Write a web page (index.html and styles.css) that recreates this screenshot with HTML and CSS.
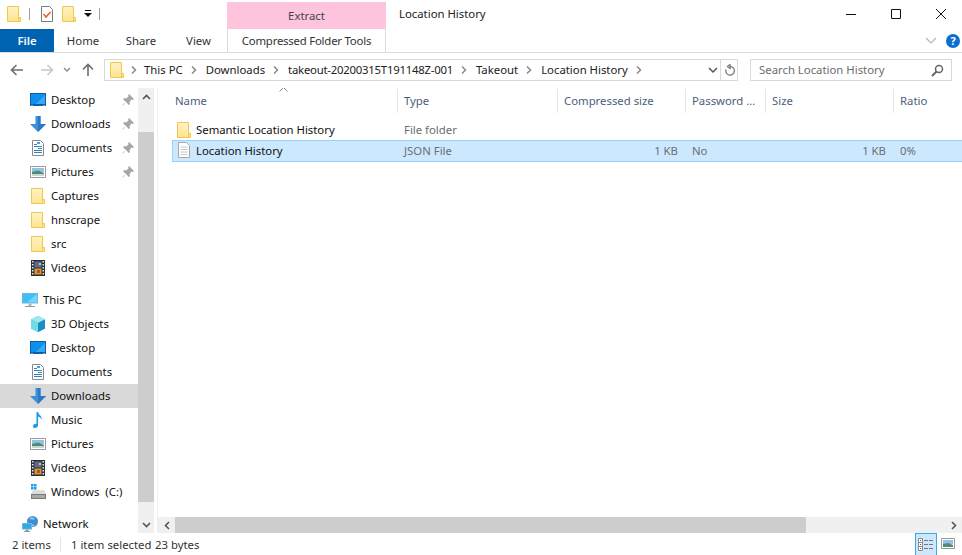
FILE: index.html
```html
<!DOCTYPE html>
<html lang="en">
<head>
  <meta charset="UTF-8" />
  <title>Location History</title>
  <link rel="stylesheet" href="styles.css">
</head>
<body>
  <svg class="defs" width="0" height="0">
    <defs>
      <linearGradient id="folderFill" x1="0" y1="0" x2="0" y2="1">
        <stop offset="0" stop-color="#fff3c4"/>
        <stop offset="1" stop-color="#ffe38f"/>
      </linearGradient>
      <symbol id="i-folder" viewBox="0 0 16 16">
        <path d="M1.500.5h11v15h-11z" fill="url(#folderFill)" stroke="#f0c850"/>
        <path d="M12.500 11.500h2v4h-2z" fill="#ffe79a" stroke="#f0c850"/>
      </symbol>
      <symbol id="i-desktop" viewBox="0 0 16 16">
        <path d="M0 1h16v13H0z" fill="#0c5fa8"/>
        <path d="M1 2h14v10H1z" fill="#0f8fec"/>
        <path d="M6 12l9-9v9z" fill="#39a7f3"/>
        <path d="M1 13h2v.6H1zM13 13h2v.6h-2z" fill="#fff"/>
      </symbol>
      <symbol id="i-down" viewBox="0 0 16 16">
        <path d="M5.500 0h5v8H16l-8 8-8-8h5.500z" fill="#3b8fdc"/>
        <path d="M8 0h2.500v8H16l-8 8z" fill="#2a78c6"/>
      </symbol>
      <symbol id="i-docs" viewBox="0 0 16 16">
        <path d="M2.500.5h8l3 3v12h-11z" fill="#fff" stroke="#8a8a8a"/>
        <path d="M4 4h3v1H4zM4 6h8v1H4zM4 10h8v1H4zM4 12h8v1H4z" fill="#2f80c4"/>
        <path d="M8 8h4v1H8z" fill="#5a8a6a"/>
        <path d="M7 2h3v2H7z" fill="#4aa0e0"/>
      </symbol>
      <symbol id="i-pics" viewBox="0 0 16 16">
        <path d="M.5 2.500h15v11H.5z" fill="#fff" stroke="#9a9a9a"/>
        <path d="M2 4h12v4H2z" fill="#8fc3e8"/>
        <path d="M2 8l6-1.500L14 9v3H2z" fill="#4f8a7a"/>
        <path d="M2 10h12v2H2z" fill="#c9d7c7"/>
      </symbol>
      <symbol id="i-video" viewBox="0 0 16 16">
        <path d="M1 0h14v16H1z" fill="#303030"/>
        <path d="M2 1h1.500v1.500H2zM2 4h1.500v1.500H2zM2 7h1.500v1.500H2zM2 10h1.500v1.500H2zM2 13h1.500v1.500H2zM12.500 1H14v1.500h-1.500zM12.500 4H14v1.500h-1.500zM12.500 7H14v1.500h-1.500zM12.500 10H14v1.500h-1.500zM12.500 13H14v1.500h-1.500z" fill="#e8e8e8"/>
        <path d="M4.500 1.500h7v6h-7z" fill="#3d78b8"/>
        <path d="M4.500 8.500h7v6h-7z" fill="#d89a30"/>
        <path d="M6 3h2v3H6zM7 10h3v3H7z" fill="#c04a30"/>
        <path d="M9 3h2v2H9z" fill="#e6c640"/>
      </symbol>
      <symbol id="i-pc" viewBox="0 0 16 16">
        <path d="M0 1h16v10.500H0z" fill="#6fb4dc"/>
        <path d="M1 2h14v8.500H1z" fill="#3fc0f5"/>
        <path d="M5 10.500L15 2v8.500z" fill="#74d4fa"/>
        <path d="M6.500 11.500h3V14h-3z" fill="#a8b8c4"/>
        <path d="M3 14h10v1H3z" fill="#8a9aa6"/>
      </symbol>
      <symbol id="i-cube" viewBox="0 0 16 16">
        <path d="M8 0l7 3.500v9L8 16l-7-3.500v-9z" fill="#2fa8c8"/>
        <path d="M8 0l7 3.500L8 7 1 3.500z" fill="#9ceaf0"/>
        <path d="M1 3.500L8 7v9l-7-3.500z" fill="#6fdde6"/>
        <path d="M8 7l7-3.500v9L8 16z" fill="#1a8fc0"/>
      </symbol>
      <symbol id="i-music" viewBox="0 0 16 16">
        <path d="M6.500 0h1.600c.3 3 4.400 3.600 3.400 8-.5-2-2-3-3.400-3.400V13c0 1.800-1.500 3-3.200 3C3.700 16 3 15.200 3 14.200c0-1.600 1.800-2.800 3.500-2.300z" fill="#1e9be8"/>
      </symbol>
      <symbol id="i-drive" viewBox="0 0 16 16">
        <path d="M1 0h2.500v2.500H1zM4 0h2.500v2.500H4zM1 3h2.500v2.500H1zM4 3h2.500v2.500H4z" fill="#19a0e8"/>
        <path d="M3 6h11l2 4H1z" fill="#dcdcdc"/>
        <path d="M1 10h15v5H1z" fill="#7a7a7a"/>
        <path d="M2 11h13v3H2z" fill="#a8a8a8"/>
        <path d="M11 12h3v1h-3z" fill="#6fe04a"/>
      </symbol>
      <symbol id="i-net" viewBox="0 0 16 16">
        <circle cx="10.500" cy="5.500" r="5.500" fill="#3f8fd0"/>
        <path d="M7 2c2-1.500 5-1 6 1-2 1-4 1-6-1zM8 8c2 0 4 .5 5 1.500-1.500 1.500-4 1.500-5-1.500z" fill="#8cc4ea"/>
        <path d="M0 7h10v6.500H0z" fill="#6fb4dc"/>
        <path d="M1 8h8v4.500H1z" fill="#2fa8e8"/>
        <path d="M3.500 13.500h3V15h-3zM2 15h6v1H2z" fill="#8a9aa6"/>
      </symbol>
      <symbol id="i-pin" viewBox="0 0 12 12">
        <path d="M7 0l5 5-1.500 1L9.500 5.500 7.500 8l.5 2L6.800 11 4 8 1 11.500 .5 11 4 8 1 5.200 2 4l2 .5 2.500-2L6 1.500z" fill="#a3a7ad"/>
      </symbol>
      <symbol id="i-crumb" viewBox="0 0 6 8">
        <path d="M1 .5L4.500 4 1 7.500" fill="none" stroke="#8a8a8a" stroke-width="1.500"/>
      </symbol>
    </defs>
  </svg>

  <div class="titlebar">
    <div class="quick">
      <svg class="ic qa-first"><use href="#i-folder"/></svg>
      <span class="qa-sep"></span>
      <svg class="ic" viewBox="0 0 16 16">
        <path d="M2.500.5h8l3 3v12h-11z" fill="#fff" stroke="#7a7a7a"/>
        <path d="M4.500 8l2.500 3 4.500-5" fill="none" stroke="#e8602c" stroke-width="1.500"/>
      </svg>
      <svg class="ic"><use href="#i-folder"/></svg>
      <svg class="qa-drop" viewBox="0 0 8 7" width="8" height="7">
        <path d="M1 0h6v1H1zM0 3h8L4 7z" fill="#111"/>
      </svg>
      <span class="qa-sep"></span>
    </div>
    <div class="extract">Extract</div>
    <div class="win-title">Location History</div>
    <div class="win-btns">
      <svg width="12" height="12" viewBox="0 0 12 12"><path d="M1 6.500h10" stroke="#111"/></svg>
      <svg width="12" height="12" viewBox="0 0 12 12"><path d="M1.500 1.500h9v9h-9z" fill="none" stroke="#111"/></svg>
      <svg width="12" height="12" viewBox="0 0 12 12"><path d="M1 1l10 10M11 1L1 11" stroke="#111" fill="none"/></svg>
    </div>
  </div>

  <div class="tabs">
    <div class="tab file">File</div>
    <div class="tab home">Home</div>
    <div class="tab share">Share</div>
    <div class="tab view">View</div>
    <div class="tab context">Compressed Folder Tools</div>
    <div class="tabs-right">
      <svg width="12" height="8" viewBox="0 0 12 8"><path d="M1 1l5 5 5-5" fill="none" stroke="#b4b4b4" stroke-width="1.200"/></svg>
      <span class="help">?</span>
    </div>
  </div>

  <div class="addressbar">
    <div class="nav-btns">
      <svg width="14" height="12" viewBox="0 0 14 12"><path d="M13 6H2M6.500 1L1.500 6l5 5" fill="none" stroke="#6d6d6d" stroke-width="1.600"/></svg>
      <svg class="fwd" width="14" height="12" viewBox="0 0 14 12"><path d="M1 6h11M7.500 1l5 5-5 5" fill="none" stroke="#c8c8c8" stroke-width="1.600"/></svg>
      <svg class="recent" width="8" height="6" viewBox="0 0 8 6"><path d="M1 1l3 3 3-3" fill="none" stroke="#8a8a8a" stroke-width="1.300"/></svg>
      <svg class="up" width="12" height="14" viewBox="0 0 12 14"><path d="M6 13V2M1 6.500l5-5 5 5" fill="none" stroke="#6d6d6d" stroke-width="1.600"/></svg>
    </div>
    <div class="path">
      <svg class="ic path-folder"><use href="#i-folder"/></svg>
      <svg class="crumb"><use href="#i-crumb"/></svg><span>This PC</span>
      <svg class="crumb"><use href="#i-crumb"/></svg><span>Downloads</span>
      <svg class="crumb"><use href="#i-crumb"/></svg><span class="long">takeout-20200315T191148Z-001</span>
      <svg class="crumb"><use href="#i-crumb"/></svg><span>Takeout</span>
      <svg class="crumb"><use href="#i-crumb"/></svg><span>Location History</span>
      <svg class="crumb"><use href="#i-crumb"/></svg>
      <div class="path-end">
        <svg class="path-drop" width="10" height="7" viewBox="0 0 10 7"><path d="M1 1l4 4 4-4" fill="none" stroke="#555" stroke-width="1.500"/></svg>
        <span class="path-sep"></span>
        <svg width="12" height="13" viewBox="0 0 12 13"><path d="M6 2.500a4.300 4.300 0 1 1-4 3M6 .5v4L3.500 2.500z" fill="none" stroke="#7a7a7a" stroke-width="1.300"/></svg>
      </div>
    </div>
    <div class="search">
      <span>Search Location History</span>
      <svg width="13" height="13" viewBox="0 0 13 13"><circle cx="8" cy="5" r="3.500" fill="none" stroke="#666" stroke-width="1.500"/><path d="M5.500 7.500L1 12" stroke="#666" stroke-width="2"/></svg>
    </div>
  </div>

  <div class="main">
    <div class="sidebar">
      <ul class="tree">
        <li><svg class="ic"><use href="#i-desktop"/></svg>Desktop<svg class="pin"><use href="#i-pin"/></svg></li>
        <li><svg class="ic"><use href="#i-down"/></svg>Downloads<svg class="pin"><use href="#i-pin"/></svg></li>
        <li><svg class="ic"><use href="#i-docs"/></svg>Documents<svg class="pin"><use href="#i-pin"/></svg></li>
        <li><svg class="ic"><use href="#i-pics"/></svg>Pictures<svg class="pin"><use href="#i-pin"/></svg></li>
        <li><svg class="ic"><use href="#i-folder"/></svg>Captures</li>
        <li><svg class="ic"><use href="#i-folder"/></svg>hnscrape</li>
        <li><svg class="ic"><use href="#i-folder"/></svg>src</li>
        <li><svg class="ic"><use href="#i-video"/></svg>Videos</li>
      </ul>
      <ul class="tree">
        <li class="root"><svg class="ic"><use href="#i-pc"/></svg>This PC</li>
        <li><svg class="ic"><use href="#i-cube"/></svg>3D Objects</li>
        <li><svg class="ic"><use href="#i-desktop"/></svg>Desktop</li>
        <li><svg class="ic"><use href="#i-docs"/></svg>Documents</li>
        <li class="current"><svg class="ic"><use href="#i-down"/></svg>Downloads</li>
        <li><svg class="ic"><use href="#i-music"/></svg>Music</li>
        <li><svg class="ic"><use href="#i-pics"/></svg>Pictures</li>
        <li><svg class="ic"><use href="#i-video"/></svg>Videos</li>
        <li><svg class="ic"><use href="#i-drive"/></svg>Windows&nbsp;&nbsp;(C:)</li>
      </ul>
      <ul class="tree">
        <li class="root"><svg class="ic"><use href="#i-net"/></svg>Network</li>
      </ul>
    </div>

    <div class="vscroll">
      <div class="vs-end">
        <svg width="9" height="6" viewBox="0 0 9 6"><path d="M1 5l3.500-3.500L8 5" fill="none" stroke="#555" stroke-width="1.600"/></svg>
      </div>
      <div class="vs-thumb"></div>
      <div class="vs-end low">
        <svg width="9" height="6" viewBox="0 0 9 6"><path d="M1 1l3.500 3.500L8 1" fill="none" stroke="#555" stroke-width="1.600"/></svg>
      </div>
    </div>

    <div class="content">
      <div class="files">
        <div class="cols head">
          <div class="name-head">Name<svg class="sort" width="9" height="5" viewBox="0 0 9 5"><path d="M.5 4.500l4-4 4 4" fill="none" stroke="#8a8a8a"/></svg></div>
          <div>Type</div>
          <div>Compressed size</div>
          <div>Password ...</div>
          <div>Size</div>
          <div class="last">Ratio</div>
        </div>
        <div class="cols row first">
          <div class="name"><svg class="ic"><use href="#i-folder"/></svg>Semantic Location History</div>
          <div>File folder</div>
          <div></div>
          <div></div>
          <div></div>
          <div></div>
        </div>
        <div class="cols row selected">
          <div class="name">
            <svg class="ic" viewBox="0 0 16 16">
              <path d="M2.500.5h8l3 3v12h-11z" fill="#fff" stroke="#a8a8a8"/>
              <path d="M4.500 5h7M4.500 7.500h7M4.500 10h7M4.500 12.500h7" stroke="#c8c8c8"/>
            </svg>Location History
          </div>
          <div>JSON File</div>
          <div class="num">1 KB</div>
          <div>No</div>
          <div class="num">1 KB</div>
          <div>0%</div>
        </div>
      </div>
      <div class="hscroll">
        <div class="hs-end">
          <svg width="6" height="9" viewBox="0 0 6 9"><path d="M5 1L1.500 4.500 5 8" fill="none" stroke="#555" stroke-width="1.600"/></svg>
        </div>
        <div class="hs-thumb"></div>
        <div class="hs-end right">
          <svg width="6" height="9" viewBox="0 0 6 9"><path d="M1 1l3.500 3.500L1 8" fill="none" stroke="#555" stroke-width="1.600"/></svg>
        </div>
      </div>
    </div>
  </div>

  <div class="status">
    <span class="st-items">2 items</span>
    <span class="st-sel">1 item selected</span>
    <span class="st-bytes">23 bytes</span>
    <div class="st-views">
      <div class="view-btn active">
        <svg width="16" height="14" viewBox="0 0 16 14">
          <path d="M.5.500h4v4h-4zM.5 4.500h4v4h-4zM.5 8.500h4v4h-4z" fill="#fff" stroke="#8a8a8a"/>
          <path d="M2 2h1v1H2zM2 6h1v1H2z" fill="#555"/>
          <path d="M2 10h1v1H2z" fill="#c03030"/>
          <path d="M6 2.500h4M11 2.500h4M6 6.500h4M11 6.500h4M6 10.500h4M11 10.500h4" stroke="#777"/>
        </svg>
      </div>
      <div class="view-btn">
        <svg width="14" height="12" viewBox="0 0 14 12">
          <path d="M.5.500h13v10H.5z" fill="#fff" stroke="#999"/>
          <path d="M2 2h10v4H2z" fill="#8fc3e8"/>
          <path d="M2 6l5-1 5 2v2H2z" fill="#4f8a7a"/>
        </svg>
      </div>
    </div>
  </div>
</body>
</html>
```

FILE: styles.css
```css
* {
  box-sizing: border-box;
}

html,
body {
  margin: 0;
  height: 100%;
}

body {
  width: 962px;
  height: 555px;
  overflow: hidden;
  display: flex;
  flex-direction: column;
  background-color: #fff;
  color: #111;
  font-family: "Noto Sans", sans-serif;
  font-size: 11.35px;
}

.defs {
  position: absolute;
}

.ic {
  width: 16px;
  height: 16px;
  flex: none;
}

/* title bar */
.titlebar {
  height: 29px;
  display: flex;
  flex: none;
}

.quick {
  width: 227px;
  display: flex;
  align-items: center;
  padding: 0 0 2px 6px;
}

.quick .ic + .ic {
  margin-left: 6px;
}

.qa-sep {
  width: 1px;
  height: 12px;
  margin: 0 9px 0 7px;
  background-color: #a0a0a0;
}

.qa-drop {
  margin-left: 7px;
}

.extract {
  width: 159px;
  margin-top: 2px;
  padding-top: 6px;
  text-align: center;
  background-color: #ffc4dd;
  color: #444;
}

.win-title {
  margin-left: 13px;
  padding-top: 6px;
  color: #222;
}

.win-btns {
  margin-left: auto;
  display: flex;
  align-items: center;
  gap: 33px;
  padding: 0 15px 2px 0;
}

/* ribbon tabs */
.tabs {
  height: 24px;
  flex: none;
  display: flex;
  align-items: stretch;
  border-bottom: 1px solid #dadbdc;
}

.tab {
  text-align: center;
  padding-top: 4px;
  color: #333;
}

.file {
  width: 54px;
  background-color: #0063b1;
  color: #fff;
  font-weight: 600;
}

.home,
.share {
  width: 58px;
}

.view {
  width: 57px;
}

.context {
  width: 159px;
  border-left: 1px solid #dadbdc;
  border-right: 1px solid #dadbdc;
  letter-spacing: -0.2px;
}

.tabs-right {
  margin-left: auto;
  display: flex;
  align-items: center;
  gap: 9px;
  padding-right: 2px;
}

.help {
  width: 14px;
  height: 14px;
  border-radius: 50%;
  background-color: #0a6fd0;
  color: #fff;
  font-size: 11px;
  font-weight: 700;
  line-height: 14px;
  text-align: center;
}

/* address row */
.addressbar {
  height: 35px;
  flex: none;
  display: flex;
  align-items: center;
  padding-bottom: 1px;
}

.nav-btns {
  width: 104px;
  display: flex;
  align-items: center;
  padding-left: 10px;
}

.fwd {
  margin-left: 16px;
}

.recent {
  margin-left: 9px;
}

.up {
  margin-left: 11px;
}

.path {
  width: 634px;
  height: 22px;
  display: flex;
  align-items: center;
  border: 1px solid #d9d9d9;
  padding-left: 4px;
  color: #222;
}

.path > span,
.search > span {
  padding-bottom: 2px;
}

.path > .long {
  letter-spacing: -0.23px;
}

.path-folder {
  margin-right: 1px;
}

.crumb {
  width: 6px;
  height: 8px;
  margin: 0 9px 0 8px;
  flex: none;
}

.path-folder + .crumb {
  margin: 0 7px 0 5px;
}

.path-end {
  margin-left: auto;
  display: flex;
  align-items: center;
  padding-right: 1px;
}

.path-drop {
  margin-right: 2px;
}

.path-sep {
  width: 1px;
  height: 20px;
  margin-right: 3px;
  background-color: #d9d9d9;
}

.search {
  width: 202px;
  height: 22px;
  margin-left: 12px;
  display: flex;
  align-items: center;
  justify-content: space-between;
  border: 1px solid #d9d9d9;
  padding: 0 7px 0 8px;
  color: #6d6d6d;
}

/* main area */
.main {
  height: 445px;
  flex: none;
  display: flex;
  overflow: hidden;
}

.sidebar {
  width: 138px;
  flex: none;
}

.tree {
  list-style: none;
  margin: 0 0 8px;
  padding: 0;
}

.tree li {
  height: 24px;
  display: flex;
  align-items: center;
  gap: 5px;
  padding: 0 0 1px 30px;
  color: #111;
}

.tree .ic {
  margin-top: 1px;
}

.tree li.root {
  padding-left: 22px;
}

.tree li.current {
  background-color: #d9d9d9;
}

.pin {
  width: 12px;
  height: 12px;
  margin-left: auto;
  margin-right: 4px;
}

.vscroll {
  width: 16px;
  flex: none;
  display: flex;
  flex-direction: column;
  background-color: #f0f0f0;
}

.vs-end {
  height: 44px;
  display: flex;
  justify-content: center;
  padding-top: 6px;
}

.vs-end.low {
  height: 31px;
  padding-top: 20px;
}

.vs-thumb {
  flex: 1;
  background-color: #cdcdcd;
}

.content {
  flex: 1;
  min-width: 0;
  margin-left: 3px;
  display: flex;
  flex-direction: column;
  border-left: 1px solid #f0f0f0;
}

.files {
  flex: 1;
  padding-left: 14px;
}

.cols {
  display: grid;
  grid-template-columns: 226px 160px 128px 80px 128px 1fr;
}

.head {
  height: 25px;
  align-items: stretch;
  color: #4c607a;
  margin-bottom: 6px;
}

.head > div {
  padding: 4px 0 0 6px;
  border-right: 1px solid #e5e5e5;
  margin-top: 1px;
  height: 24px;
}

.head > .name-head {
  position: relative;
  padding-left: 3px;
}

.head > .last {
  border-right: none;
}

.sort {
  position: absolute;
  left: 107px;
  top: -2px;
}

.row {
  height: 22px;
  align-items: center;
  color: #6d6d6d;
}

.row > div {
  padding-left: 6px;
}

.row > .name {
  display: flex;
  align-items: center;
  gap: 4px;
  padding-left: 4px;
  color: #111;
}

.row.first {
  height: 21px;
}

.selected {
  background-color: #cce8ff;
  box-shadow: inset 1px 0 #99d1ff, inset 0 1px #99d1ff, inset 0 -1px #99d1ff;
}

.selected > div {
  padding-bottom: 2px;
}

.row > .num {
  text-align: right;
  padding-right: 8px;
}

.hscroll {
  height: 16px;
  flex: none;
  display: flex;
  background-color: #f0f0f0;
}

.hs-end {
  width: 17px;
  display: flex;
  align-items: center;
  justify-content: center;
}

.hs-end.right {
  margin-left: auto;
}

.hs-thumb {
  width: 631px;
  background-color: #cdcdcd;
}

/* status bar */
.status {
  height: 22px;
  flex: none;
  display: flex;
  align-items: center;
  color: #333;
  white-space: nowrap;
}

.st-items {
  width: 61px;
  padding-left: 12px;
  border-right: 1px solid #e5e5e5;
}

.st-sel {
  margin-left: 10px;
  width: 84px;
}

.st-views {
  margin-left: auto;
  display: flex;
  align-items: flex-end;
  align-self: stretch;
  padding-right: 3px;
}

.view-btn {
  width: 22px;
  height: 22px;
  display: flex;
  align-items: center;
  justify-content: center;
}

.view-btn.active {
  background-color: #cce8ff;
  border: 1px solid #3fa9e0;
  border-bottom: none;
}
```
